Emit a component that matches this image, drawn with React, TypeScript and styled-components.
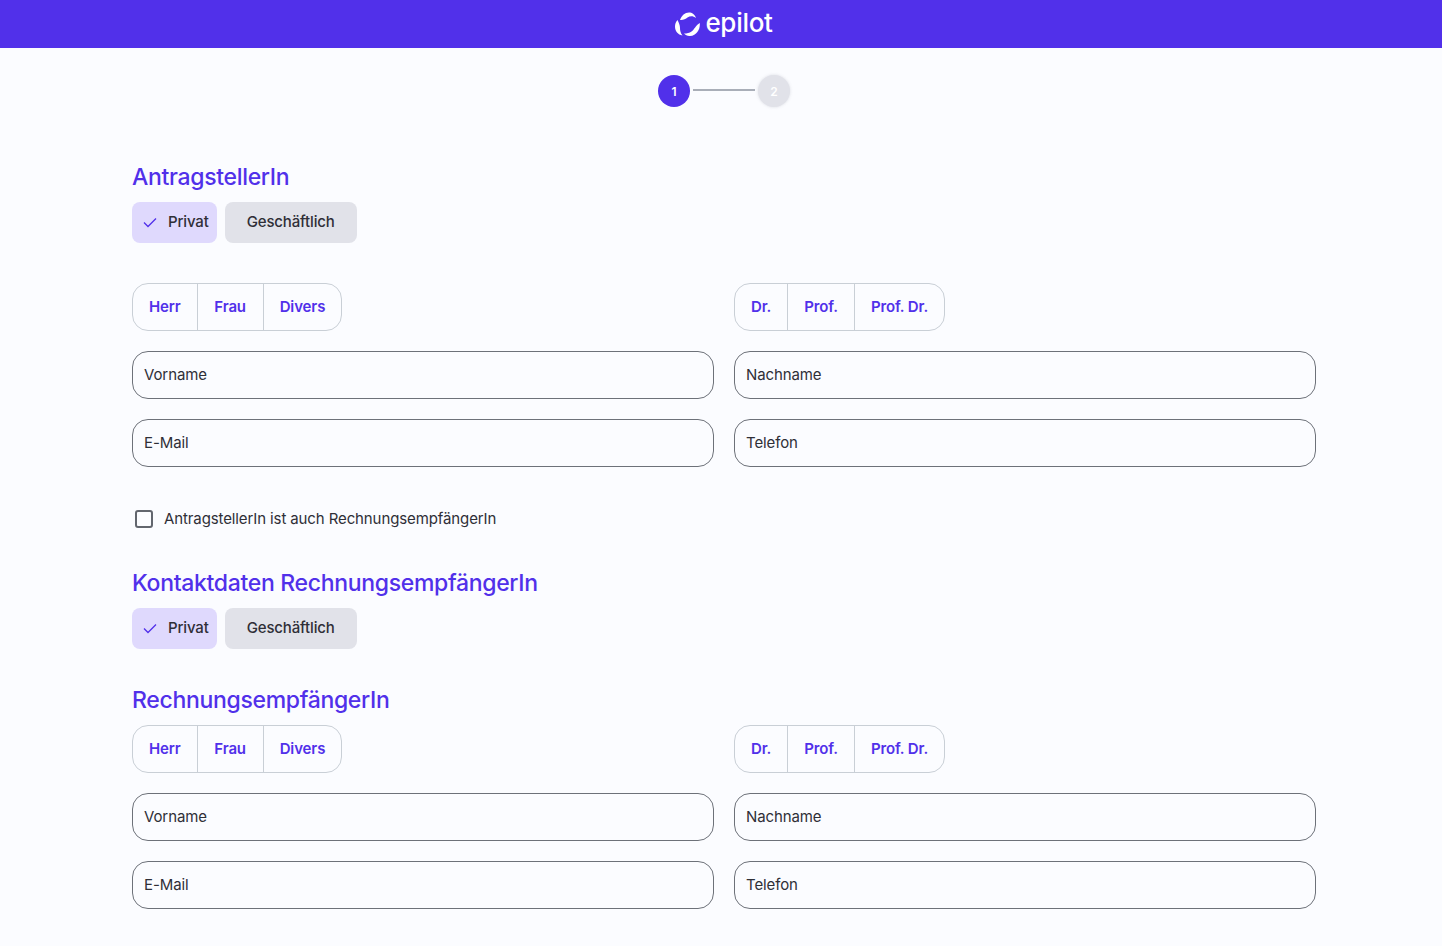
import React from 'react';
import styled, { createGlobalStyle } from 'styled-components';

const primary = '#5130ea';

const Global = createGlobalStyle`
  html, body {
    margin: 0;
    padding: 0;
    background: #fbfcff;
    font-family: "Inter", "Liberation Sans", sans-serif;
    color: #2f2f37;
  }
  * { box-sizing: border-box; }
`;

const Header = styled.header`
  height: 48px;
  padding-left: 6px;
  background: ${primary};
  display: flex;
  align-items: center;
  justify-content: center;
  gap: 4px;
`;

const LogoText = styled.span`
  color: #fff;
  font-size: 26px;
  font-weight: 500;
  line-height: 46px;
  height: 48px;
  letter-spacing: -0.3px;
`;

const Stepper = styled.div`
  height: 32px;
  margin-top: 27px;
  padding-left: 6px;
  display: flex;
  align-items: center;
  justify-content: center;
  gap: 3px;
`;

const Step = styled.div<{ $active?: boolean }>`
  width: 32px;
  height: 32px;
  border-radius: 50%;
  background: ${(p) => (p.$active ? primary : '#e1e2e9')};
  box-shadow: ${(p) => (p.$active ? 'none' : '0 0 3px rgba(120, 125, 140, 0.25)')};
  color: #fff;
  font-size: 12px;
  font-weight: 600;
  display: flex;
  align-items: center;
  justify-content: center;
`;

const StepLine = styled.div`
  width: 62px;
  height: 2px;
  background: #a9aeb8;
  margin-top: -2px;
`;

const Main = styled.main`
  width: 1184px;
  margin: 0 0 0 132px;
  padding-top: 56px;
`;

const Heading = styled.h2`
  margin: 0 0 11px;
  height: 28px;
  font-size: 23px;
  line-height: 28px;
  font-weight: 500;
  letter-spacing: -0.32px;
  color: ${primary};
`;

const Chips = styled.div`
  display: flex;
  gap: 8px;
`;

const Chip = styled.div<{ $selected?: boolean }>`
  height: 41px;
  border-radius: 8px;
  display: flex;
  align-items: center;
  gap: 10px;
  font-size: 15px;
  font-weight: 500;
  letter-spacing: -0.15px;
  padding: ${(p) => (p.$selected ? '0 8px 2px 10px' : '0 22px 2px')};
  background: ${(p) => (p.$selected ? '#dfd9fd' : '#e1e2e9')};
`;

const Grid = styled.div`
  display: grid;
  grid-template-columns: 582px 582px;
  column-gap: 20px;
  row-gap: 20px;
`;

const Toggle = styled.div`
  display: inline-flex;
  justify-self: start;
  height: 48px;
  border: 1px solid #c9cfd6;
  border-radius: 16px;
`;

const ToggleItem = styled.div<{ $min?: number }>`
  min-width: ${(p) => p.$min ?? 0}px;
  padding: 0 16px 2px;
  display: flex;
  align-items: center;
  justify-content: center;
  font-size: 15px;
  font-weight: 600;
  letter-spacing: -0.12px;
  color: ${primary};
  & + & {
    border-left: 1px solid #c9cfd6;
  }
`;

const Input = styled.div`
  height: 48px;
  border: 1px solid #6d7179;
  border-radius: 16px;
  padding: 0 11px 2px;
  display: flex;
  align-items: center;
  font-size: 15px;
  letter-spacing: -0.11px;
`;

const CheckRow = styled.label`
  display: flex;
  align-items: center;
  gap: 11px;
  height: 24px;
  margin: 39px 0 0 3px;
  font-size: 15px;
  letter-spacing: -0.11px;
`;

const Box = styled.span`
  width: 18px;
  height: 18px;
  border: 2px solid #62666e;
  border-radius: 3px;
  margin-top: 2px;
`;

const Spaced = styled.div<{ $top: number }>`
  margin-top: ${(p) => p.$top}px;
`;

const Logo = () => (
  <svg width="26" height="24" viewBox="0 0 26 24" fill="#fff">
    <path d="M5 8C6.500 3.500 10 .5 14 .5c3 0 6 2 7 5.500-3-2.500-6-2.200-8.500-.5C10.500 6.800 8 8.500 5 8Z" />
    <path d="M2.500 8C.8 10 0 12 0 14.500 0 19 3 22.800 7.500 23.500 5.500 21 5 18.500 5 16c0-3-1.200-5-2.500-8Z" />
    <path d="M24.800 11c.5 6-2.800 12.500-9.800 13-2.500.1-4.500-1-6-2.500 3 0 5.500-.5 7.500-2 3-2 4-6 8.300-8.500Z" />
  </svg>
);

const Check = () => (
  <svg width="16" height="16" viewBox="0 0 16 16" fill="none">
    <path d="M2 8.500 6 12.500 14 4.500" stroke={primary} strokeWidth="1.300" />
  </svg>
);

function ChipRow() {
  return (
    <Chips>
      <Chip $selected><Check />Privat</Chip>
      <Chip>Geschäftlich</Chip>
    </Chips>
  );
}

function PersonFields() {
  return (
    <Grid>
      <Toggle>
        <ToggleItem>Herr</ToggleItem>
        <ToggleItem $min={66}>Frau</ToggleItem>
        <ToggleItem>Divers</ToggleItem>
      </Toggle>
      <Toggle>
        <ToggleItem>Dr.</ToggleItem>
        <ToggleItem>Prof.</ToggleItem>
        <ToggleItem>Prof. Dr.</ToggleItem>
      </Toggle>
      <Input>Vorname</Input>
      <Input>Nachname</Input>
      <Input>E-Mail</Input>
      <Input>Telefon</Input>
    </Grid>
  );
}

export default function App() {
  return (
    <>
      <Global />
      <Header>
        <Logo />
        <LogoText>epilot</LogoText>
      </Header>
      <Stepper>
        <Step $active>1</Step>
        <StepLine />
        <Step>2</Step>
      </Stepper>
      <Main>
        <Heading>AntragstellerIn</Heading>
        <ChipRow />
        <Spaced $top={40}>
          <PersonFields />
        </Spaced>
        <CheckRow>
          <Box />
          AntragstellerIn ist auch RechnungsempfängerIn
        </CheckRow>
        <Spaced $top={39}>
          <Heading>Kontaktdaten RechnungsempfängerIn</Heading>
        </Spaced>
        <ChipRow />
        <Spaced $top={37}>
          <Heading>RechnungsempfängerIn</Heading>
        </Spaced>
        <PersonFields />
      </Main>
    </>
  );
}
